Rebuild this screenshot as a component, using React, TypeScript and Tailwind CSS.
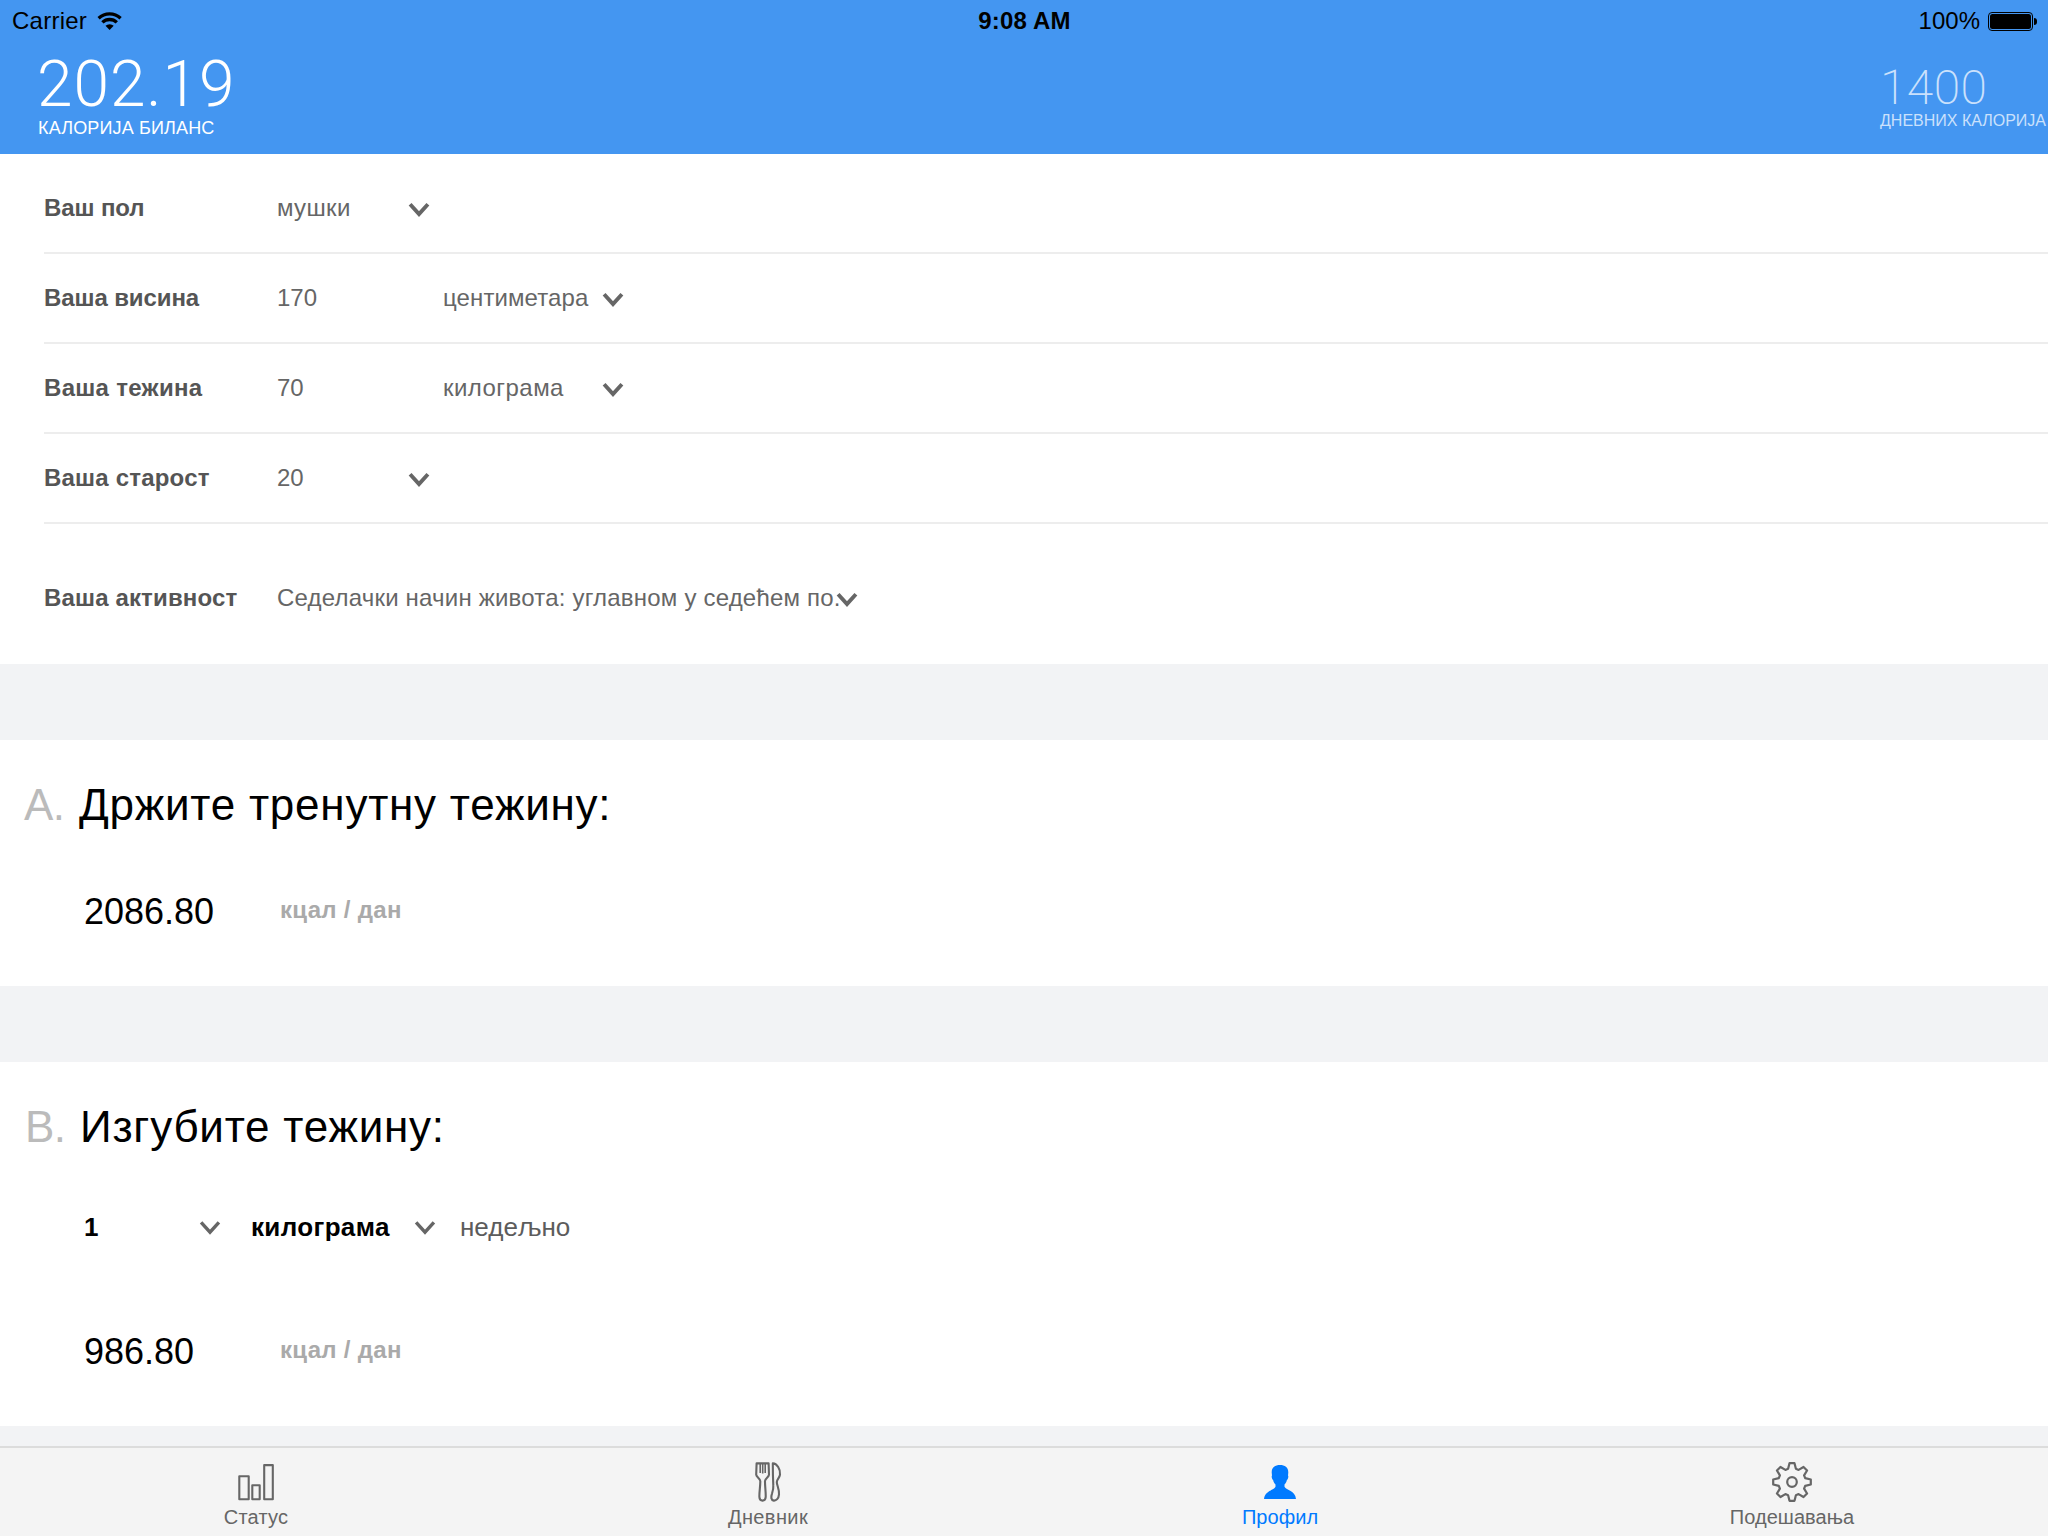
import type { ReactNode } from "react";

function Chevron({ weight = 3.9 }: { weight?: number }) {
  return (
    <svg width="20" height="14" viewBox="0 0 20 14" className="shrink-0 overflow-visible">
      <path d="M1.1 1.3 L10 11.1 L18.9 1.3" fill="none" stroke="#666" strokeWidth={weight} />
    </svg>
  );
}

function WifiIcon() {
  return (
    <svg width="26" height="20" viewBox="0 0 26 20" className="shrink-0">
      <path d="M1.6 7.2 A16.2 16.2 0 0 1 23.6 7.2" fill="none" stroke="#000" strokeWidth="3.3" />
      <path d="M5.4 11.4 A10.4 10.4 0 0 1 19.8 11.4" fill="none" stroke="#000" strokeWidth="3.3" />
      <path d="M12.6 19 L8.5 14.8 A6 6 0 0 1 16.7 14.8 Z" fill="#000" />
    </svg>
  );
}

function Battery() {
  return (
    <div className="flex items-center gap-px">
      <div className="h-[19px] w-[45px] rounded-[4px] border border-black p-px">
        <div className="h-full w-full rounded-[2.5px] bg-black" />
      </div>
      <div className="h-[7px] w-[3px] rounded-r-full bg-black" />
    </div>
  );
}

function StatusIcon() {
  return (
    <svg width="40" height="40" viewBox="0 0 40 40" fill="none" stroke="#666" strokeWidth="2.1" strokeLinejoin="round">
      <rect x="3.3" y="14.2" width="9.4" height="23" />
      <rect x="16.3" y="23.2" width="7.4" height="14" />
      <rect x="28.2" y="3.1" width="8.6" height="34.1" />
    </svg>
  );
}

function CutleryIcon() {
  return (
    <svg width="40" height="40" viewBox="0 0 40 40" fill="none" stroke="#666" strokeWidth="2.1" strokeLinejoin="round">
      <path d="M8.6 1.4 H20.6 L21 12.6 C20.9 15.2 17.2 16.2 17 19 C16.9 24 17.9 30 17.7 35 C17.4 39.8 11.6 39.8 11.4 35 C11.2 30 12.4 24 12.3 19 C12 16.2 8.4 15.2 8.2 12.6 Z" />
      <path d="M12.2 2 V11 M14.7 2 V11.4 M17.2 2 V11" strokeWidth="1.6" />
      <path d="M24.8 1.4 C29 1.6 32.6 7.2 32 12.6 C31.6 16 28.9 17.2 28.8 20 C28.8 23.5 31.4 27 31 32.4 C30.7 36.6 28.2 38.8 25.8 38.6 C23 38.2 22.8 35 24 31.6 C24.8 29 25.6 26.6 25.3 23.4 C25 17 24.8 9 24.8 1.4 Z" />
    </svg>
  );
}

function ProfileIcon() {
  return (
    <svg width="40" height="40" viewBox="0 0 40 40" fill="#007aff">
      <path d="M20 3 C24.8 3 28.3 5 28.3 10.4 L28 13.4 C28.7 14 28.2 17.6 26.9 18 C26.5 20.2 25.4 21.6 24.5 22.6 V24.8 C26.4 28.6 35.2 28.4 36 37 H4 C4.8 28.4 13.6 28.6 15.5 24.8 V22.6 C14.6 21.6 13.5 20.2 13.1 18 C11.8 17.6 11.3 14 12 13.4 L11.7 10.4 C11.7 5 15.2 3 20 3 Z" />
    </svg>
  );
}

const TEETH = [0, 45, 90, 135, 180, 225, 270, 315];

// Outline of the cog: four points per tooth, joined along the body.
const COG = TEETH.flatMap((deg) => {
  const a = (deg * Math.PI) / 180;
  return [
    [13.2, -3.9],
    [18.8, -2.5],
    [18.8, 2.5],
    [13.2, 3.9],
  ].map(([r, t]) => {
    const x = 20 + r * Math.cos(a) - t * Math.sin(a);
    const y = 20 + r * Math.sin(a) + t * Math.cos(a);
    return `${x.toFixed(2)},${y.toFixed(2)}`;
  });
}).join(" ");

function GearIcon() {
  return (
    <svg width="40" height="40" viewBox="0 0 40 40" fill="none" stroke="#666" strokeWidth="2.2" strokeLinejoin="round">
      <polygon points={COG} />
      <circle cx="20" cy="20" r="4.8" />
    </svg>
  );
}

function Row({ label, labelClass, children }: { label: string; labelClass: string; children: ReactNode }) {
  return (
    <div className="ml-11 flex h-[90px] items-center border-b-2 border-[#ededed] text-2xl text-[#666]">
      <div className={`w-[233px] shrink-0 font-bold text-[#555] ${labelClass}`}>{label}</div>
      {children}
    </div>
  );
}

function Heading({ letter, letterClass, children }: { letter: string; letterClass: string; children: ReactNode }) {
  return (
    <h2 className="flex text-[44px] leading-[52px] tracking-[0.76px] text-black">
      <span className={`tracking-[-0.5px] text-[#bbb] ${letterClass}`}>{letter}</span>
      <span>{children}</span>
    </h2>
  );
}

function Result({ value }: { value: string }) {
  return (
    <div className="flex h-11 items-center pl-[60px]">
      <span className="w-[196px] text-4xl leading-[44px] text-black">{value}</span>
      <span className="pb-1 text-2xl font-bold leading-8 tracking-[0.3px] text-[#aaa]">кцал / дан</span>
    </div>
  );
}

function Tab({ icon, label, className }: { icon: ReactNode; label: string; className: string }) {
  return (
    <div className="flex flex-1 flex-col items-center pt-[14px]">
      {icon}
      <span className={`mt-[3px] text-xl leading-6 ${className}`}>{label}</span>
    </div>
  );
}

export default function App() {
  return (
    <div className="flex h-[1536px] w-[2048px] flex-col overflow-hidden bg-[#f2f3f5] font-['Liberation_Sans',Arial,sans-serif]">
      <header className="h-[154px] shrink-0 bg-[#4496f1]">
        <div className="grid h-[42px] grid-cols-3 items-center pl-3 pr-[11px] text-2xl text-black">
          <div className="flex items-center gap-[10px]">
            <span className="tracking-[0.25px]">Carrier</span>
            <WifiIcon />
          </div>
          <div className="text-center font-bold tracking-[0.2px]">9:08 AM</div>
          <div className="flex items-center justify-end gap-2">
            <span>100%</span>
            <Battery />
          </div>
        </div>
        <div className="flex justify-between">
          <div className="pl-[38px] pt-[11px] text-white">
            <div className="-ml-px font-['Roboto'] text-[64px] font-light leading-[64px] tracking-[0.95px]">202.19</div>
            <div className="mt-px text-lg leading-5 tracking-[0.15px]">КАЛОРИЈА БИЛАНС</div>
          </div>
          <div className="w-[168px] whitespace-nowrap pt-[22px] text-[#cbe1fc]">
            <div className="font-['Roboto'] text-5xl font-extralight leading-[48px] tracking-[0.4px]">1400</div>
            <div className="text-base leading-[18px]">ДНЕВНИХ КАЛОРИЈА</div>
          </div>
        </div>
      </header>

      <section className="h-[510px] shrink-0 bg-white pt-[10px]">
        <Row label="Ваш пол" labelClass="tracking-[-0.1px]">
          <div className="w-[132px] tracking-[0.35px]">мушки</div>
          <div className="pt-1"><Chevron /></div>
        </Row>
        <Row label="Ваша висина" labelClass="tracking-[-0.1px]">
          <div className="w-[166px]">170</div>
          <div className="w-[160px] tracking-[0.1px]">центиметара</div>
          <div className="pt-1"><Chevron /></div>
        </Row>
        <Row label="Ваша тежина" labelClass="tracking-[0.3px]">
          <div className="w-[166px]">70</div>
          <div className="w-[160px] tracking-[0.45px]">килограма</div>
          <div className="pt-1"><Chevron /></div>
        </Row>
        <Row label="Ваша старост" labelClass="tracking-[0.2px]">
          <div className="w-[132px]">20</div>
          <div className="pt-1"><Chevron /></div>
        </Row>
        <div className="ml-11 flex h-[140px] items-center pt-2 text-2xl text-[#666]">
          <div className="w-[233px] shrink-0 font-bold tracking-[0.15px] text-[#555]">Ваша активност</div>
          <div className="w-[560px] whitespace-nowrap tracking-[0.2px]">
            Седелачки начин живота: углавном у седећем по.
          </div>
          <div className="pt-1"><Chevron /></div>
        </div>
      </section>

      <section className="mt-[76px] h-[246px] shrink-0 bg-white pl-6 pt-[39px]">
        <Heading letter="A." letterClass="w-[55px]">Држите тренутну тежину:</Heading>
        <div className="mt-[59px]">
          <Result value="2086.80" />
        </div>
      </section>

      <section className="mt-[76px] h-[364px] shrink-0 bg-white pl-6 pt-[39px]">
        <Heading letter="B." letterClass="w-14 pl-px">Изгубите тежину:</Heading>
        <div className="mt-[55px] flex h-10 items-center pl-[60px] text-[26px] text-black">
          <span className="w-[116px] pb-0.5 font-bold">1</span>
          <Chevron weight={3.4} />
          <span className="ml-[31px] w-[164px] pb-0.5 font-bold tracking-[0.35px]">килограма</span>
          <Chevron weight={3.4} />
          <span className="ml-[25px] pb-0.5 text-[#5c5c5c]">недељно</span>
        </div>
        <div className="mt-[82px]">
          <Result value="986.80" />
        </div>
      </section>

      <nav className="mt-5 flex h-[90px] shrink-0 border-t-2 border-[#dcdcdc] bg-[#f4f4f4]">
        <Tab icon={<StatusIcon />} label="Статус" className="tracking-[0.2px] text-[#666]" />
        <Tab icon={<CutleryIcon />} label="Дневник" className="tracking-[0.4px] text-[#666]" />
        <Tab icon={<ProfileIcon />} label="Профил" className="tracking-[0.05px] text-[#007aff]" />
        <Tab icon={<GearIcon />} label="Подешавања" className="tracking-[0.05px] text-[#666]" />
      </nav>
    </div>
  );
}
